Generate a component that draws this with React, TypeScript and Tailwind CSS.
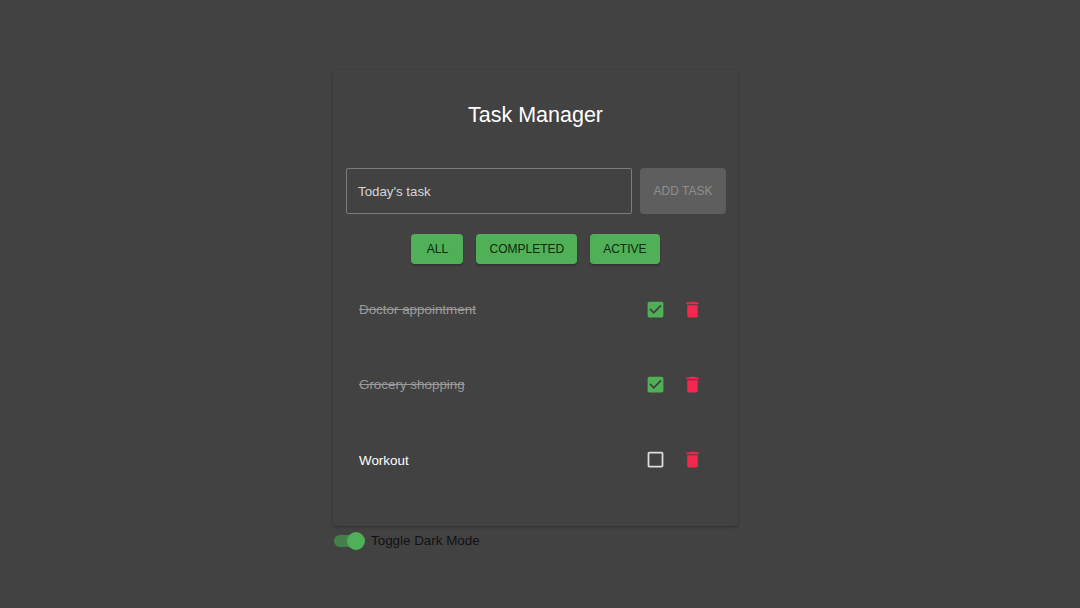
const font = "[font-family:'Liberation_Sans',Arial,sans-serif]";

function Check() {
  return (
    <svg width="21" height="21" viewBox="0 0 24 24" aria-hidden="true">
      <path fill="#50b057" d="M19 3H5c-1.11 0-2 .9-2 2v14c0 1.1.89 2 2 2h14c1.11 0 2-.9 2-2V5c0-1.1-.89-2-2-2zm-9 14l-5-5 1.41-1.41L10 14.17l7.59-7.59L19 8l-9 9z" />
    </svg>
  );
}

function Empty() {
  return (
    <svg width="21" height="21" viewBox="0 0 24 24" aria-hidden="true">
      <path fill="#dedede" d="M19 5v14H5V5h14m0-2H5c-1.1 0-2 .9-2 2v14c0 1.1.9 2 2 2h14c1.1 0 2-.9 2-2V5c0-1.1-.9-2-2-2z" />
    </svg>
  );
}

function Trash() {
  return (
    <svg width="21" height="21" viewBox="0 0 24 24" aria-hidden="true">
      <path fill="#f5274e" d="M6 19c0 1.1.9 2 2 2h8c1.1 0 2-.9 2-2V7H6v12zM19 4h-3.5l-1-1h-5l-1 1H5v2h14V4z" />
    </svg>
  );
}

function Task({ label, done }: { label: string; done: boolean }) {
  return (
    <div className="h-[75px] flex items-center pl-[13px] pr-[22px]">
      <span className={done ? "flex-1 pt-[1px] text-[13.4px] text-[#9a9a9a] line-through" : "flex-1 pt-[3px] text-[13.4px] text-white"}>{label}</span>
      <div className="w-[21px] h-[21px] mr-[16px]">{done ? <Check /> : <Empty />}</div>
      <div className="w-[21px] h-[21px]"><Trash /></div>
    </div>
  );
}

function FilterButton({ label }: { label: string }) {
  return (
    <button className="h-[30px] min-w-[52px] px-[13px] rounded-[4px] bg-[#50b057] text-[12px] text-[#0c2a0e] shadow-[0_2px_2px_rgba(0,0,0,0.22)]">
      {label}
    </button>
  );
}

export default function App() {
  return (
    <div className={`${font} w-[1080px] h-[608px] bg-[#424242] flex flex-col items-center overflow-hidden pr-[9px]`}>
      <div className="w-[405px] h-[456px] mt-[70px] rounded-[4px] bg-[#424242] shadow-[0_1px_3px_rgba(0,0,0,0.3)] px-[13px] flex flex-col">
        <h1 className="mt-[30px] h-[30px] leading-[30px] text-center text-[21.5px] text-white">Task Manager</h1>
        <div className="mt-[38px] flex gap-[8px]">
          <div className="w-[286px] h-[46px] shrink-0 border border-[#7c7c7c] rounded-[2px] pl-[11px] pt-[1px] flex items-center text-[13.3px] text-[#d6d6d6]">Today's task</div>
          <button className="w-[86px] h-[46px] shrink-0 rounded-[4px] bg-[#5e5e5e] text-[12px] text-[#8f8f8f]">ADD TASK</button>
        </div>
        <div className="mt-[20px] flex justify-center gap-[13px]">
          <FilterButton label="ALL" />
          <FilterButton label="COMPLETED" />
          <FilterButton label="ACTIVE" />
        </div>
        <div className="mt-[8px] flex flex-col">
          <Task label="Doctor appointment" done />
          <Task label="Grocery shopping" done />
          <Task label="Workout" done={false} />
        </div>
      </div>
      <div className="w-[405px] mt-[3px] flex items-center">
        <div className="relative w-[32px] h-[24px] flex items-center">
          <div className="ml-[1px] w-[30px] h-[12px] rounded-full bg-[#44804a]" />
          <div className="absolute left-[14px] top-[3px] w-[18px] h-[18px] rounded-full bg-[#50b057]" />
        </div>
        <span className="ml-[6px] pt-[1px] text-[13.4px] text-[#111111]">Toggle Dark Mode</span>
      </div>
    </div>
  );
}
